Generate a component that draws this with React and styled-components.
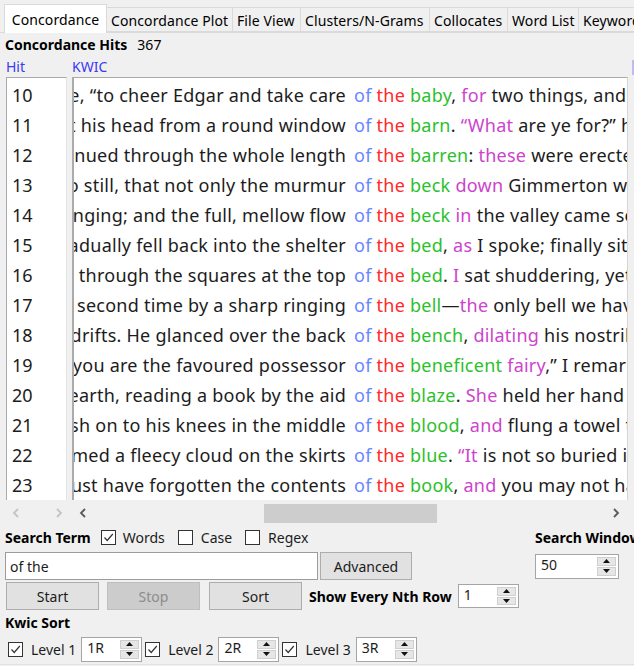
import React from 'react'
import styled, { createGlobalStyle } from 'styled-components'

const GlobalStyle = createGlobalStyle`
  html, body { margin: 0; padding: 0; background: #f0f0f0; }
  body {
    font-family: "Noto Sans", "Open Sans", sans-serif;
    font-size: 14px;
    color: #000;
    overflow: hidden;
  }
`;

const tabs = [
  { label: 'Concordance', w: 103, active: true },
  { label: 'Concordance Plot', w: 127 },
  { label: 'File View', w: 69 },
  { label: 'Clusters/N-Grams', w: 130 },
  { label: 'Collocates', w: 79 },
  { label: 'Word List', w: 72 },
  { label: 'Keyword List', w: 100 },
];

// k = plain, g = green, m = magenta
const rows = [
  { n: 10, left: 'ne, “to cheer Edgar and take care', right: [['baby', 'g'], [', ', 'k'], ['for', 'm'], [' two things, and you will', 'k']] },
  { n: 11, left: 't his head from a round window', right: [['barn', 'g'], ['.  ', 'k'], ['“What', 'm'], [' are ye for?” he shouted', 'k']] },
  { n: 12, left: 'ntinued through the whole length', right: [['barren', 'g'], [': ', 'k'], ['these', 'm'], [' were erected to mark', 'k']] },
  { n: 13, left: 'o still, that not only the murmur', right: [['beck', 'g'], [' ', 'k'], ['down', 'm'], [' Gimmerton was audible', 'k']] },
  { n: 14, left: 'inging; and the full, mellow flow', right: [['beck', 'g'], [' ', 'k'], ['in', 'm'], [' the valley came soothingly', 'k']] },
  { n: 15, left: 'radually fell back into the shelter', right: [['bed', 'g'], [', ', 'k'], ['as', 'm'], [' I spoke; finally sitting up', 'k']] },
  { n: 16, left: 'ed through the squares at the top', right: [['bed', 'g'], ['. ', 'k'], ['I', 'm'], [' sat shuddering, yet, as', 'k']] },
  { n: 17, left: 'a second time by a sharp ringing', right: [['bell', 'g'], ['—', 'k'], ['the', 'm'], [' only bell we have yet', 'k']] },
  { n: 18, left: ' drifts. He glanced over the back', right: [['bench', 'g'], [', ', 'k'], ['dilating', 'm'], [' his nostrils and', 'k']] },
  { n: 19, left: ' you are the favoured possessor', right: [['beneficent', 'g'], [' ', 'k'], ['fairy', 'm'], [',” I remarked', 'k']] },
  { n: 20, left: 'hearth, reading a book by the aid', right: [['blaze', 'g'], ['. ', 'k'], ['She', 'm'], [' held her hand in', 'k']] },
  { n: 21, left: 'ush on to his knees in the middle', right: [['blood', 'g'], [', ', 'k'], ['and', 'm'], [' flung a towel to', 'k']] },
  { n: 22, left: 'rmed a fleecy cloud on the skirts', right: [['blue', 'g'], ['.  ', 'k'], ['“It', 'm'], [' is not so buried in', 'k']] },
  { n: 23, left: 'must have forgotten the contents', right: [['book', 'g'], [', ', 'k'], ['and', 'm'], [' you may not have', 'k']] },
];

const colors = { k: '#1c1c1c', g: '#2cbf2c', m: '#cc44cc', of: '#6688ff', the: '#ff2a2a' };

const Window = styled.div`
  width: 634px;
  height: 666px;
  overflow: hidden;
  display: flex;
  flex-direction: column;
`;

const TabBar = styled.div`
  display: flex;
  align-items: flex-end;
  height: 33px;
  box-sizing: border-box;
  padding-left: 4px;
  border-bottom: 1px solid #dadada;
`;

const Tab = styled.div`
  flex: none;
  box-sizing: border-box;
  width: ${p => p.$w}px;
  height: ${p => (p.$active ? 29 : 25)}px;
  margin-bottom: ${p => (p.$active ? -1 : 0)}px;
  margin-left: ${p => (p.$first ? 0 : -1)}px;
  background: ${p => (p.$active ? '#ffffff' : '#f0f0f0')};
  border: 1px solid #dadada;
  border-bottom: ${p => (p.$active ? 'none' : '1px solid #dadada')};
  display: flex;
  align-items: center;
  justify-content: ${p => (p.$active ? 'center' : 'flex-start')};
  padding-left: ${p => (p.$active ? 0 : 4)}px;
  padding-top: ${p => (p.$active ? 0 : 1)}px;
  font-size: 14px;
  letter-spacing: 0.1px;
  white-space: nowrap;
  overflow: hidden;
`;

const Panel = styled.div`
  display: flex;
  flex-direction: column;
  flex: 1;
`;

const HitsLine = styled.div`
  height: 23px;
  display: flex;
  align-items: center;
  gap: 10px;
  padding-left: 5px;
  font-size: 14px;
  span:first-child { font-weight: 700; }
`;

const HeaderRow = styled.div`
  height: 21px;
  display: flex;
  align-items: center;
  padding-left: 6px;
  font-size: 14px;
  color: #3a3af5;
  position: relative;
`;

const HeaderCell = styled.div`
  width: ${p => p.$w}px;
  flex: none;
`;

const ScrollHint = styled.div`
  position: absolute;
  right: 0;
  top: 4px;
  width: 2px;
  height: 15px;
  background: #c9b8f0;
`;

const Table = styled.div`
  height: 423px;
  display: flex;
  gap: 5px;
  padding-left: 6px;
`;

const Column = styled.div`
  box-sizing: border-box;
  width: ${p => p.$w}px;
  flex: none;
  background: #fff;
  border-top: 1px solid #ababab;
  border-left: ${p => (p.$thick ? 2 : 1)}px solid #ababab;
  border-right: 1px solid ${p => (p.$thick ? '#d6d6d6' : '#e4e4e4')};
  padding-top: 2px;
  overflow: hidden;
`;

const HitNum = styled.div`
  height: 30px;
  line-height: 30px;
  font-size: 18px;
  padding-left: 5px;
  color: #1c1c1c;
`;

const KwicRow = styled.div`
  height: 30px;
  line-height: 30px;
  font-size: 18px;
  letter-spacing: 0.25px;
  display: flex;
  gap: 8px;
  white-space: nowrap;
  color: #1c1c1c;
`;

const LeftContext = styled.div`
  width: 272px;
  flex: none;
  display: flex;
  justify-content: flex-end;
  overflow: hidden;
`;

const RightContext = styled.div`
  flex: 1;
  overflow: hidden;
`;

const Word = styled.span`
  color: ${p => colors[p.$c]};
`;

const HScroll = styled.div`
  height: 23px;
  display: flex;
  padding-left: 6px;
`;

const ScrollPart = styled.div`
  box-sizing: border-box;
  width: ${p => p.$w}px;
  flex: none;
  display: flex;
  align-items: center;
  padding: 3px 0 0 ${p => p.$pad}px;
  gap: ${p => p.$gap}px;
`;

const Thumb = styled.div`
  margin-left: ${p => p.$from}px;
  width: ${p => p.$w}px;
  height: 19px;
  background: #cdcdcd;
  flex: none;
`;

const ScrollEnd = styled.span`
  margin-left: auto;
  margin-right: 8px;
  display: flex;
`;

const Controls = styled.div`
  display: grid;
  grid-template-columns: 530px 1fr;
  grid-template-rows: 29px 28px;
  padding-left: 5px;
`;

const Row = styled.div`
  display: flex;
  align-items: center;
  gap: ${p => p.$gap || 0}px;
  height: ${p => p.$h}px;
  padding-left: ${p => p.$pad || 0}px;
`;

const Bold = styled.span`
  font-weight: 700;
  font-size: 14px;
  white-space: nowrap;
  margin-left: ${p => p.$ml || 0}px;
  margin-right: ${p => p.$mr || 0}px;
`;

const CheckLabel = styled.label`
  display: flex;
  align-items: center;
  gap: ${p => p.$gap || 7}px;
  margin-left: ${p => p.$ml || 0}px;
  font-size: 14px;
  color: #1c1c1c;
  white-space: nowrap;
`;

const Box = styled.span`
  width: 15px;
  height: 15px;
  box-sizing: border-box;
  border: 1px solid #333;
  background: #fff;
  display: inline-flex;
  align-items: center;
  justify-content: center;
  flex: none;
`;

const TextInput = styled.div`
  box-sizing: border-box;
  width: 313px;
  height: 28px;
  background: #fff;
  border: 1px solid #9c9c9c;
  padding-left: 4px;
  display: flex;
  align-items: center;
  font-size: 14px;
  color: #1c1c1c;
`;

const Button = styled.div`
  box-sizing: border-box;
  width: ${p => p.$w}px;
  height: 28px;
  flex: none;
  margin-left: ${p => p.$ml || 0}px;
  background: ${p => (p.$disabled ? '#cccccc' : '#e1e1e1')};
  border: 1px solid ${p => (p.$disabled ? '#bfbfbf' : '#adadad')};
  color: ${p => (p.$disabled ? '#8d8d8d' : '#1c1c1c')};
  display: flex;
  align-items: center;
  justify-content: center;
  font-size: 14px;
`;

const SpinBox = styled.div`
  box-sizing: border-box;
  width: ${p => p.$w}px;
  height: ${p => p.$h}px;
  flex: none;
  display: flex;
  background: #fff;
  border: 1px solid #a5a5a5;
`;

const SpinValue = styled.div`
  flex: 1;
  padding: 0 0 3px 5px;
  display: flex;
  align-items: center;
  font-size: 14px;
  color: #1c1c1c;
`;

const SpinArrows = styled.div`
  width: 19px;
  padding: 2px 2px 2px 0;
  display: flex;
  flex-direction: column;
  gap: 1px;
`;

const SpinBtn = styled.div`
  flex: 1;
  background: #e6e6e6;
  border: 1px solid #cfcfcf;
  display: flex;
  align-items: center;
  justify-content: center;
`;

const ButtonRow = styled.div`
  display: flex;
  align-items: center;
  height: 30px;
  padding: 1px 0 0 6px;
`;

const LevelRow = styled.div`
  display: flex;
  align-items: center;
  height: 30px;
  padding-left: 8px;
  gap: 3px;
  border-bottom: 1px solid #e2e2e2;
`;

const LevelGroup = styled.div`
  display: flex;
  align-items: center;
  gap: 5px;
`;

function Check({ checked }) {
  return (
    <Box>
      {checked && (
        <svg width="11" height="11" viewBox="0 0 11 11">
          <polyline points="1.5,5.5 4.2,8.5 9.8,2" fill="none" stroke="#333" strokeWidth="1.2" />
        </svg>
      )}
    </Box>
  )
}

function Spinner({ value, w, h }) {
  return (
    <SpinBox $w={w} $h={h}>
      <SpinValue>{value}</SpinValue>
      <SpinArrows>
        <SpinBtn>
          <svg width="7" height="4" viewBox="0 0 7 4"><polygon points="0,4 3.5,0 7,4" fill="#111" /></svg>
        </SpinBtn>
        <SpinBtn>
          <svg width="7" height="4" viewBox="0 0 7 4"><polygon points="0,0 3.5,4 7,0" fill="#111" /></svg>
        </SpinBtn>
      </SpinArrows>
    </SpinBox>
  )
}

function Chevron({ dir, color }) {
  const pts = dir === 'left' ? '6,1 2,5 6,9' : '2,1 6,5 2,9';
  return (
    <svg width="8" height="10" viewBox="0 0 8 10">
      <polyline points={pts} fill="none" stroke={color} strokeWidth="1.8" />
    </svg>
  )
}

export default function App() {
  return (
    <Window>
      <GlobalStyle />
      <TabBar>
        {tabs.map((t, i) => (
          <Tab key={t.label} $w={t.w} $active={t.active} $first={i === 0}>{t.label}</Tab>
        ))}
      </TabBar>
      <Panel>
        <HitsLine><span>Concordance Hits</span><span>367</span></HitsLine>
        <HeaderRow>
          <HeaderCell $w={66}>Hit</HeaderCell>
          <HeaderCell $w={60}>KWIC</HeaderCell>
          <ScrollHint />
        </HeaderRow>
        <Table>
          <Column $w={61}>
            {rows.map(r => <HitNum key={r.n}>{r.n}</HitNum>)}
          </Column>
          <Column $w={556} $thick>
            {rows.map(r => (
              <KwicRow key={r.n}>
                <LeftContext><span>{r.left}</span></LeftContext>
                <RightContext>
                  <Word $c="of">of</Word> <Word $c="the">the</Word>{' '}
                  {r.right.map(([text, c], i) => <Word key={i} $c={c}>{text}</Word>)}
                </RightContext>
              </KwicRow>
            ))}
          </Column>
        </Table>
        <HScroll>
          <ScrollPart $w={66} $pad={6} $gap={35}>
            <Chevron dir="left" color="#c4c4c4" />
            <Chevron dir="right" color="#c4c4c4" />
          </ScrollPart>
          <ScrollPart $w={556} $pad={7} $gap={0}>
            <Chevron dir="left" color="#5a5a5a" />
            <Thumb $from={177} $w={173} />
            <ScrollEnd><Chevron dir="right" color="#5a5a5a" /></ScrollEnd>
          </ScrollPart>
        </HScroll>
        <Controls>
          <Row $h={29}>
            <Bold $mr={10}>Search Term</Bold>
            <CheckLabel><Check checked />Words</CheckLabel>
            <CheckLabel $ml={13} $gap={8}><Check />Case</CheckLabel>
            <CheckLabel $ml={13} $gap={8}><Check />Regex</CheckLabel>
          </Row>
          <Row $h={29}>
            <Bold>Search Window</Bold>
          </Row>
          <Row $h={28} $gap={2}>
            <TextInput>of the</TextInput>
            <Button $w={92}>Advanced</Button>
          </Row>
          <Row $h={28}>
            <Spinner value="50" w={84} h={25} />
          </Row>
        </Controls>
        <ButtonRow>
          <Button $w={93}>Start</Button>
          <Button $w={93} $ml={8} $disabled>Stop</Button>
          <Button $w={93} $ml={9}>Sort</Button>
          <Bold $ml={7} $mr={6}>Show Every Nth Row</Bold>
          <Spinner value="1" w={61} h={24} />
        </ButtonRow>
        <Row $h={23} $pad={5}>
          <Bold>Kwic Sort</Bold>
        </Row>
        <LevelRow>
          {['1R', '2R', '3R'].map((v, i) => (
            <LevelGroup key={v}>
              <CheckLabel $gap={8}><Check checked />Level {i + 1}</CheckLabel>
              <Spinner value={v} w={61} h={25} />
            </LevelGroup>
          ))}
        </LevelRow>
      </Panel>
    </Window>
  )
}
